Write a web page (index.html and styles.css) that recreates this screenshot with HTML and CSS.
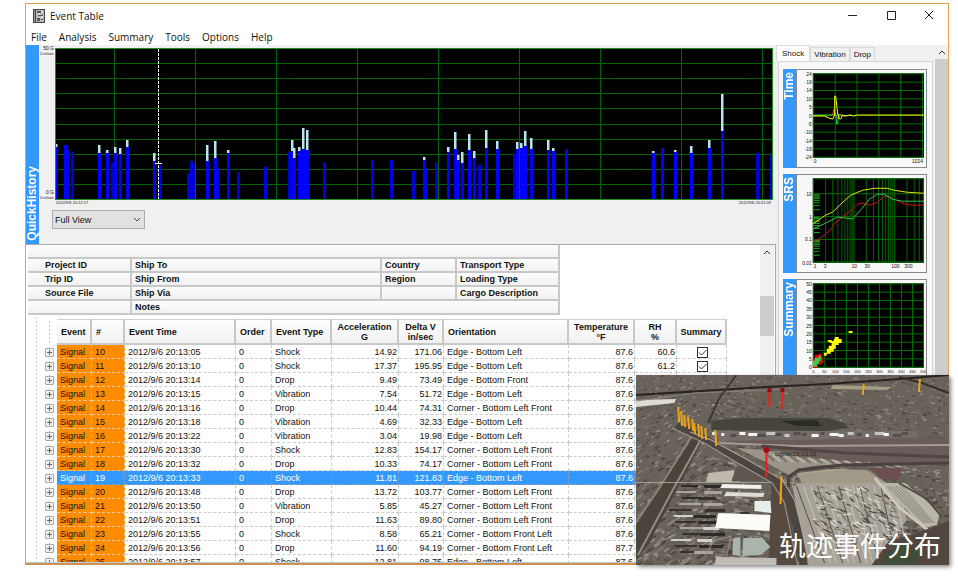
FILE: index.html
```
<!DOCTYPE html>
<html lang="en">
	<head>
		<meta charset="utf-8">
		<title>Event Table</title>
		<link rel="stylesheet" href="styles.css">
	</head>
	<body>
		<div class="window">
			<div class="titlebar">
				<svg class="appicon" viewBox="0 0 12 14">
					<rect x="0" y="0" width="12" height="14" fill="#444"/>
					<rect x="3" y="1" width="8" height="12" fill="#bbb"/>
					<rect x="1" y="1" width="1" height="12" fill="#999"/>
					<path d="M4 2h4v2H4zM5 6h5v1H5zM4 9h3v3H4zM8 10h2v1H8z" fill="#555"/>
					<path d="M8 3h2M5 5h2M8 8h2" stroke="#fff"/>
				</svg>
				<span class="title">Event Table</span>
				<button class="winbtn" aria-label="Minimize"><svg viewBox="0 0 10 10"><path d="M0 5.5h9"/></svg></button>
				<button class="winbtn" aria-label="Maximize"><svg viewBox="0 0 10 10"><path d="M1.5 1.500h8v8h-8z"/></svg></button>
				<button class="winbtn" aria-label="Close"><svg viewBox="0 0 10 10"><path d="M1 1l8 8M9 1l-8 8"/></svg></button>
			</div>
			<div class="menubar">
				<button>File</button>
				<button>Analysis</button>
				<button>Summary</button>
				<button>Tools</button>
				<button>Options</button>
				<button>Help</button>
			</div>
			<div class="main">
				<div class="left">
					<div class="history">
						<div class="strip strip-bottom"><span>QuickHistory</span></div>
						<div class="historyBody">
							<svg id="history" class="historyChart" viewBox="39 45 737 160" preserveAspectRatio="none"></svg>
							<select class="view" aria-label="View">
								<option>Full View</option>
							</select>
						</div>
					</div>
					<div class="events">
						<div class="sheet">
							<table class="info">
								<colgroup><col class="i1"><col class="i2"><col class="i3"><col class="i4"></colgroup>
								<tr><th colspan="4"></th></tr>
								<tr><th>Project ID</th><th>Ship To</th><th>Country</th><th>Transport Type</th></tr>
								<tr><th>Trip ID</th><th>Ship From</th><th>Region</th><th>Loading Type</th></tr>
								<tr><th>Source File</th><th>Ship Via</th><th></th><th>Cargo Description</th></tr>
								<tr><th></th><th colspan="3">Notes</th></tr>
							</table>
							<div class="tree">
								<table class="data">
									<colgroup>
										<col class="c0"><col class="c1"><col class="c2"><col class="c3"><col class="c4"><col class="c5">
										<col class="c6"><col class="c7"><col class="c8"><col class="c9"><col class="c10"><col class="c11">
									</colgroup>
									<thead>
										<tr>
											<td class="node"></td>
											<th>Event</th><th>#</th><th>Event Time</th><th>Order</th><th>Event Type</th>
											<th class="mid">Acceleration<br>G</th><th class="mid">Delta V<br>in/sec</th><th>Orientation</th>
											<th class="mid">Temperature<br>°F</th><th class="mid">RH<br>%</th><th class="mid">Summary</th>
										</tr>
									</thead>
									<tbody id="rows"></tbody>
								</table>
							</div>
						</div>
						<div class="scroll">
							<button aria-label="Scroll up"><svg viewBox="0 0 8 6"><path d="M1 5l3-3 3 3"/></svg></button>
							<div class="thumb"></div>
						</div>
					</div>
				</div>
				<div class="right">
					<div class="panel">
						<div class="tabs">
							<button class="on">Shock</button><button>Vibration</button><button>Drop</button>
						</div>
						<div class="page">
							<div class="group">
								<div class="strip"><span>Time</span></div>
								<svg id="time" viewBox="0 0 132 99"></svg>
							</div>
							<div class="group">
								<div class="strip"><span>SRS</span></div>
								<svg id="srs" viewBox="0 0 132 99"></svg>
							</div>
							<div class="group">
								<div class="strip"><span>Summary</span></div>
								<svg id="summary" viewBox="0 0 132 99"></svg>
							</div>
						</div>
					</div>
					<div class="scroll wide">
						<button aria-label="Scroll up"><svg viewBox="0 0 8 6"><path d="M1 5l3-3 3 3"/></svg></button>
						<div class="thumb"></div>
					</div>
				</div>
			</div>
		</div>
		<div class="map">
			<svg id="map" viewBox="0 0 312 190" preserveAspectRatio="none"></svg>
			<span class="caption">轨迹事件分布</span>
		</div>

		<script src="script.js"></script>
	</body>
</html>
```
FILE: styles.css
```
*{box-sizing: border-box;}
body{
	margin: 0;
	padding: 3px 9px 12px 25px;
	height: 100vh;
	display: flex;
	background: #ffffff;
	font-family: "Liberation Sans", Arial, sans-serif;
	font-size: 9px;
	color: #111111;
	position: relative;
	overflow: hidden;
}
button{
	border: 0;
	padding: 0;
	background: none;
	font: inherit;
	color: inherit;
}
.window{
	flex: 1;
	min-width: 0;
	display: flex;
	flex-direction: column;
	border: 1px solid #e9a24a;
	border-bottom: 2px solid #d09050;
	background: #ffffff;
}
.titlebar{
	display: flex;
	align-items: center;
	height: 24px;
	padding-left: 7px;
	font: 10px "Open Sans", "Noto Sans", sans-serif;
}
.appicon{width: 12px;height: 14px;}
.title{flex: 1;padding-left: 5px;}
.winbtn{width: 38px;height: 24px;}
.winbtn svg{width: 10px;height: 10px;fill: none;stroke: #222222;stroke-width: 1;}
.menubar{
	display: flex;
	align-items: center;
	gap: 12px;
	height: 17px;
	padding-left: 5px;
	font: 10px "Open Sans", "Noto Sans", sans-serif;
}
.main{flex: 1;min-height: 0;display: flex;}
.left{flex: 1;min-width: 0;display: flex;flex-direction: column;}
.history{display: flex;height: 199px;background: #f0f0f0;}
.historyBody{flex: 1;min-width: 0;display: flex;flex-direction: column;align-items: flex-start;}
.historyChart{display: block;width: 100%;height: 160px;}
.strip{
	width: 13px;
	background: #3399ff;
	color: #ffffff;
	display: flex;
	justify-content: center;
	align-items: flex-start;
	padding: 3px 0;
	font: bold 12px/13px "Liberation Sans", Arial, sans-serif;
}
.strip-bottom{align-items: flex-end;}
.strip span{writing-mode: vertical-rl;transform: rotate(180deg);}
.view{
	appearance: none;
	width: 93px;
	height: 19px;
	margin: 5px 0 0 13px;
	padding: 0 2px;
	border: 1px solid #adadad;
	border-radius: 0;
	font: 9px "Liberation Sans", Arial, sans-serif;
	color: #111111;
	background: #e1e1e1 url("data:image/svg+xml,%3Csvg xmlns='http://www.w3.org/2000/svg' width='8' height='6'%3E%3Cpath d='M1 1l3 3 3-3' fill='none' stroke='%23444'/%3E%3C/svg%3E") no-repeat right 3px center;
}
.events{
	flex: 1;
	min-height: 0;
	display: flex;
	border-top: 1px solid #a8a8b0;
	border-right: 1px solid #a8a8b0;
	border-bottom: 1px solid #b8cce0;
}
.sheet{flex: 1;min-width: 0;padding-left: 2px;overflow: hidden;}
table{border-collapse: separate;border-spacing: 0;table-layout: fixed;}
th{
	text-align: left;
	background: linear-gradient(#fdfdfd, #f1f1f1);
	border-right: 2px solid #c8c8c8;
	border-bottom: 2px solid #c8c8c8;
	overflow: hidden;
	white-space: nowrap;
}
.info{width: 532px;}
.info th{height: 14px;padding: 1px 3px 0;line-height: 11px;}
.info th:first-child{padding-left: 17px;}
.i1{width: 104px;}
.i2{width: 250px;}
.i3{width: 75px;}
.i4{width: 103px;}
.tree{
	padding-top: 4px;
	background: linear-gradient(#ffffff 50%, #c8c8c8 50%) 8px 0 / 1px 4px repeat-y;
}
.data{width: 699px;}
.c0{width: 29px;}
.c1{width: 35px;}
.c2{width: 33px;}
.c3{width: 111px;}
.c4{width: 36px;}
.c5{width: 60px;}
.c6{width: 67px;}
.c7{width: 45px;}
.c8{width: 125px;}
.c9{width: 66px;}
.c10{width: 42px;}
.c11{width: 50px;}
.data th{height: 26px;padding: 0 4px;line-height: 10px;border-top: 1px solid #d0d0d0;}
.data .mid{text-align: center;padding: 0 2px;}
.data td{
	height: 14px;
	padding: 1px 1px 0 3px;
	line-height: 12px;
	white-space: nowrap;
	border-right: 1px dashed #cccccc;
	border-bottom: 1px dashed #cccccc;
}
.data .node{
	border: 0;
	padding: 0 3px 0 0;
	text-align: right;
	line-height: 0;
	background: linear-gradient(#ffffff 50%, #c8c8c8 50%) 21px 0 / 1px 4px repeat-y;
}
.node button{
	width: 9px;
	height: 9px;
	border: 1px solid #a8a8a8;
	border-radius: 1px;
	background:
		linear-gradient(#666666, #666666) center / 5px 1px no-repeat,
		linear-gradient(#666666, #666666) center / 1px 5px no-repeat,
		#f0f0f0;
}
.data .mark{background: #ff8c00;border-color: #e6c9a0;}
.data .num{text-align: right;}
.data .box{text-align: center;line-height: 0;}
.box input{
	appearance: none;
	display: block;
	width: 11px;
	height: 11px;
	margin: 0 auto;
	border: 1px solid #333333;
	background: #ffffff url("data:image/svg+xml,%3Csvg xmlns='http://www.w3.org/2000/svg' width='9' height='9'%3E%3Cpath d='M1 4.5l2.500 2.500 5-5' fill='none' stroke='%23333'/%3E%3C/svg%3E") no-repeat center;
}
.data .sel td:not(.node){
	background: #3399ff;
	color: #ffffff;
	border-color: #8a9cb0;
}
.scroll{width: 14px;margin-right: 1px;background: #f0f0f0;display: flex;flex-direction: column;}
.scroll button{height: 14px;}
.scroll svg{width: 8px;height: 6px;fill: none;stroke: #333333;stroke-width: 1;}
.scroll .thumb{height: 40px;margin-top: 37px;background: #cdcdcd;}
.right{width: 172px;display: flex;background: #f0f0f0;}
.panel{flex: 1;min-width: 0;overflow: hidden;}
.tabs{display: flex;align-items: flex-end;height: 16px;font-size: 8px;}
.tabs button{
	height: 14px;
	padding: 0 3px;
	border: 1px solid #d9d9d9;
	border-bottom: 0;
	background: #f0f0f0;
}
.tabs .on{height: 16px;padding: 0 5px;background: #ffffff;}
.page{
	margin: 0 2px;
	padding: 7px 5px 0 4px;
	height: 100%;
	border: 1px solid #d5d5d5;
	background: #f7f7f7;
	display: flex;
	flex-direction: column;
	gap: 6px;
}
.group{display: flex;height: 99px;}
.group .strip{flex: none;}
.group svg{flex: 1;min-width: 0;height: 99px;background: #f8f8f8;outline: 1px solid #888888;outline-offset: -1px;}
.scroll.wide{width: 13px;margin: 0;}
.wide .thumb{flex: 1;height: auto;margin: 0;}
.map{
	position: absolute;
	right: 9px;
	bottom: 12px;
	width: 313px;
	height: 190px;
	box-shadow: 2px 2px 4px #888888;
	background: #6e675f;
	overflow: hidden;
}
.map svg{display: block;width: 100%;height: 100%;}
.caption{
	position: absolute;
	right: 8px;
	bottom: 2px;
	color: #ffffff;
	font: 27px/36px KaiTi, "AR PL UKai CN", "Noto Sans CJK SC", sans-serif;
}
```
FILE: script.js
```
// event rows: number, time, type, acceleration, delta V, orientation, temperature, RH
var rows=[
	[10,"05","Shock","14.92","171.06","Edge - Bottom Left","87.6","60.6"],
	[11,"10","Shock","17.37","195.95","Edge - Bottom Left","87.6","61.2"],
	[12,"14","Drop","9.49","73.49","Edge - Bottom Front","87.6",""],
	[13,"15","Vibration","7.54","51.72","Edge - Bottom Left","87.6",""],
	[14,"16","Drop","10.44","74.31","Corner - Bottom Left Front","87.6",""],
	[15,"18","Vibration","4.69","32.33","Edge - Bottom Left","87.6",""],
	[16,"22","Vibration","3.04","19.98","Edge - Bottom Left","87.6",""],
	[17,"30","Shock","12.83","154.17","Corner - Bottom Left Front","87.6",""],
	[18,"32","Drop","10.33","74.17","Corner - Bottom Left Front","87.6",""],
	[19,"33","Shock","11.81","121.83","Edge - Bottom Left","87.6",""],
	[20,"48","Drop","13.72","103.77","Corner - Bottom Left Front","87.6",""],
	[21,"50","Vibration","5.85","45.27","Corner - Bottom Left Front","87.6",""],
	[22,"51","Drop","11.63","89.80","Corner - Bottom Left Front","87.6",""],
	[23,"55","Shock","8.58","65.21","Corner - Bottom Front Left","87.6",""],
	[24,"56","Drop","11.60","94.19","Corner - Bottom Front Left","87.7",""],
	[25,"57","Shock","12.81","98.75","Edge - Bottom Left","87.6",""]
]
var html=""
for(var i=0;i<rows.length;i++){
	var r=rows[i]
	html+=`<tr class="${r[0]==19?"sel":""}">
		<td class="node"><button aria-label="Expand ${r[0]}"></button></td>
		<td class="mark">Signal</td><td class="mark">${r[0]}</td>
		<td>2012/9/6 20:13:${r[1]}</td><td>0</td><td>${r[2]}</td>
		<td class="num">${r[3]}</td><td class="num">${r[4]}</td><td>${r[5]}</td>
		<td class="num">${r[6]}</td><td class="num">${r[7]}</td>
		<td class="box"><input type="checkbox" checked aria-label="Summary ${r[0]}"></td>
	</tr>`
}
document.getElementById("rows").innerHTML=html

function line(x1,y1,x2,y2,c,w){
	return `<path d="M${x1} ${y1}L${x2} ${y2}" stroke="${c}" stroke-width="${w||1}" fill="none"/>`
}
function rect(x,y,w,h,c){
	return `<rect x="${x}" y="${y}" width="${w}" height="${h}" fill="${c}"/>`
}
function curve(points,c,w){
	return `<polyline points="${points}" stroke="${c}" stroke-width="${w||1}" fill="none"/>`
}
function label(x,y,t,anchor,size){
	return `<text x="${x}" y="${y}" font-size="${size||5}" text-anchor="${anchor||"start"}" fill="#111">${t}</text>`
}

// quick history: x, top of the light part (0 = none), top of the blue part
var bars=[
	[55,144,147],[64,0,145],[67,0,150],[71,0,152],[98,145,153],[106,150,153],[111,0,162],[114,147,153],
	[119,148,154],[126,140,147],[153,153,161],[158,0,165],[187,0,173],[190,0,161],[192,0,164],[206,145,161],
	[214,141,158],[217,0,168],[227,150,153],[237,0,172],[264,0,167],[288,0,152],[291,140,151],[293,148,158],
	[298,147,151],[302,128,149],[306,130,150],[323,0,162],[371,0,160],[390,0,160],[412,0,171],[423,157,160],
	[425,0,168],[435,0,163],[447,147,152],[454,132,149],[457,155,160],[461,152,163],[468,134,150],[473,151,158],
	[478,0,165],[485,130,148],[496,141,149],[513,0,154],[516,142,149],[520,143,148],[524,131,146],[530,138,149],
	[547,140,150],[552,148,151],[565,0,149],[652,151,153],[661,0,148],[674,150,152],[690,146,153],[708,140,148],
	[721,94,131],[756,0,153],[770,0,155]
]
var s=rect(55,48,718,152,"#000")
for(var x=114;x<772;x+=81) s+=line(x+.5,48,x+.5,199,"#006400")
for(var n=0;n<10;n++){
	var y=48+Math.round(n*15.1)
	s+=line(55,y+.5,773,y+.5,"#006400")
}
for(var b of bars){
	s+=rect(b[0],b[2],3,199-b[2],b[1]||b[2]<150?"#0000ff":"#0000d8")
	if(b[1]) s+=rect(b[0],b[1],2.5,b[2]-b[1],"#b8e4f4")
}
s+=`<rect x="55.5" y="48.5" width="717" height="151" fill="none" stroke="#1c8a1c"/>`
s+=`<path d="M158.5 49V199" stroke="#fff" stroke-dasharray="3 1"/><path d="M155 163.5h7" stroke="#fff"/>`
s+=label(54,50,"50 G","end")+label(54,55,"0 in/sec","end",4)
s+=label(54,194,"0 G","end")+label(54,199,"0 in/sec","end",4)
s+=label(56,204,"2012/9/6 20:12:17","start",4)+label(771,204,"2012/9/6 20:21:09","end",4)
document.getElementById("history").innerHTML=s

// time plot
s=rect(17,4,112,85,"#000")
for(var n=0;n<=5;n++) s+=line(17.5+n*22,4,17.5+n*22,89,"#007000")
var marks=["24","19","14","10","5","0","-5","-10","-14","-19","-24"]
for(var n=0;n<=10;n++){
	y=4.5+n*8.4
	s+=line(17,y,129,y,"#007000")+label(16,y+2,marks[n],"end")
}
s+=label(18,94,"0")+label(128,94,"1024","end")
s+=curve("34,46 37,46 38,40 40,47 43,50 45,45 48,47","#ff2020")
s+=curve("17,46 36,46 40,44 41,55 42,55 43,45 48,47 56,46","#30d050")
s+=curve("17,47 29,47 33,49 37,50 39,46 39,27 40,27 42,45 43,49 45,50 47,46 50,47 54,46 58,47 61,46 129,46","#ffff00")
document.getElementById("time").innerHTML=s

// shock response spectrum, log-log
s=rect(17,4,112,85,"#000")
for(var d=0;d<3;d++){
	for(var n=1;n<10;n++){
		x=17.5+41*(d+Math.log10(n))
		if(x<129) s+=line(x,4,x,89,"#006800")
		y=88.5-23*(d+Math.log10(n))
		s+=line(17,y,n==1?129:24,y,n==1?"#007000":"#20a020")
	}
}
s+=line(17,19.5,129,19.5,"#007000")
s+=`<rect x="17.5" y="4.5" width="111" height="84" fill="none" stroke="#006800"/>`
s+=label(16,22,"10","end")+label(16,45,"1","end")+label(16,67,"0.1","end")+label(16,91,"0.01","end")
s+=label(18,94,"1")+label(28,94,"3")+label(56,94,"10")+label(69,94,"30")+label(96,94,"100")+label(109,94,"300")
s+=`<g transform="translate(17 4)">`
s+=curve("0,64 8,60 14,55 17,53 23,44 35,35 45,26 50,25 58,27 65,24 72,18 80,20 90,25 98,27 112,27","#d01010")
s+=curve("0,51 13,45 25,39 33,40 40,41 48,32 57,21 65,16 72,16 80,21 90,23 112,23","#30c050")
s+=curve("0,46 13,37 20,34 27,27 38,17 50,12 62,10 75,10 82,12 95,14 112,15","#e0e000")
s+=`</g>`
document.getElementById("srs").innerHTML=s

// summary scatter
s=rect(17,4,112,85,"#000")
for(var n=0;n<=10;n++){
	x=17.5+n*11.1
	y=4.5+n*8.4
	s+=line(x,4,x,89,"#007000")+line(17,y,129,y,"#007000")
	s+=label(16,y+2,50-n*5,"end")+label(x,94,n*50,"middle",4)
}
s+=`<g transform="translate(17 4)"><path d="M0 76h2v-4h4v-1h3v3h1v6H8v2H5v3H0z" fill="#f00"/>
	<path d="M0 84v-6h2v-3h4v-2h2v5H6v3H4v3z" fill="#30d050"/>
	<path d="M11 73v-3h3v-4h2v-3h3v-2h4v5h-2v3h-3v2h-4v2z" fill="#ff0"/>
	<path d="M15 57h4v1h2v-2h1v-2h4v2h3v4h-3v2h-7v-2h-2v-1h-2zM36 48h4v2h-4z" fill="#ff0"/></g>`
document.getElementById("summary").innerHTML=s

// aerial view: blocks of houses first, then roads, yards and markers
var seed=7
function rnd(){
	seed=(seed*16807)%2147483647
	return seed/2147483647
}
function pick(a){return a[Math.floor(rnd()*a.length)]}
function poly(p,c){return `<polygon points="${p}" fill="${c}"/>`}
var tones=["#867f77","#59524b","#736b62","#4c4741","#979188","#665e56","#5f6157"]
s=`<defs><filter id="soft"><feGaussianBlur stdDeviation=".4"/></filter></defs><g filter="url(#soft)">`
s+=rect(0,0,312,190,"#69635b")
for(var i=0;i<4200;i++){
	x=rnd()*312
	y=rnd()*190
	var k=1+y/120
	s+=`<rect x="${x.toFixed(1)}" y="${y.toFixed(1)}" width="${((1+rnd()*2.5)*k).toFixed(1)}" height="${((.5+rnd()*.8)*k).toFixed(1)}" fill="${pick(tones)}" transform="rotate(${x<75?-30:8} ${x.toFixed(0)} ${y.toFixed(0)})"/>`
}
// dark field, warehouses along the line
s+=poly("75,46 100,43 190,43 208,48 212,53 190,56 75,55","#45453a")
s+=poly("145,46 180,45 185,51 160,51","#292c27")
s+=rect(75,56,205,12,"#746d68")
for(var i=0;i<22;i++) s+=rect((76+i*9).toFixed(0),57+(i%3),3+Math.round(rnd()*7),3,pick(["#f4f4f0","#c8c6c0","#55504c","#f4f4f0"]))
s+=poly("0,25 40,24 38,28 0,32","#dedbd6")
s+=poly("196,10 255,12 250,15 194,14","#a49c86")
// rail line at the top
s+=curve("0,20 130,12 190,9 250,5 312,0","#262321",2)
s+=curve("262,2 285,8 312,18","#332e2b",2)
s+=curve("0,26 60,18 150,14","#8b847d",1)
s+=curve("100,0 82,25 72,48","#3d3935",2)
// diagonal road on the left
s+=poly("57,62 67,64 12,170 0,185 0,150","#4a443d")
s+=curve("66,62 35,118 2,180","#958c80",2)
s+=curve("56,60 22,115 0,147","#8b8275",2)
// main roads
s+=poly("90,66 312,62 312,90 200,86 130,74","#6a5b58")
s+=curve("80,68 160,71 312,70","#a69c92",2)
s+=curve("125,71 210,78 312,82","#4f4543",3)
s+=poly("100,73 130,75 160,82 235,88 175,91 152,100 125,85","#9b9489")
for(var i=0;i<22;i++) s+=line(130+i*6,79+i*.5,138+i*6,86+i*.3,i%2?"#c9c4bb":"#625b55")
s+=poly("160,98 195,94 230,95 250,108 165,108","#a09988")
s+=poly("232,93 265,93 262,105 245,104","#6d5050")
// lots and yards
s+=poly("72,98 98,95 97,108 70,107","#c0b9ae")
s+=poly("100,93 112,88 135,105 95,106","#5c5750")
s+=poly("162,108 262,108 270,145 235,190 172,190 156,112","#a7a297")
for(var i=0;i<15;i++) s+=line(160+i*7,111,188+i*6,188,i%3?"#c6c2b7":"#5a554b",1)
for(var i=0;i<220;i++){
	x=176+rnd()*82
	y=111+rnd()*58
	s+=line(x.toFixed(0),y.toFixed(0),(x+2+rnd()*5).toFixed(0),(y+1+rnd()*3).toFixed(0),pick(["#48443d","#dedbd3","#777166"]))
}
s+=poly("242,108 268,108 303,137 300,150 288,153","#b9b7a9")
for(var i=0;i<6;i++) s+=line(250+i*3,111,287+i*2,148,"#8f8c7e")
s+=curve("238,103 262,132 312,172","#cfc7bb",3)
s+=curve("262,108 290,124 305,142","#504d42",2)
s+=poly("280,158 312,146 312,190 235,190 252,166","#514640")
s+=poly("247,178 265,170 290,177 275,190 245,190","#414b38")
s+=poly("135,108 148,112 162,190 132,190","#554940")
s+=rect(0,107,160,1,"#a39b92")
// sheds and the white warehouse
for(var i=0;i<24;i++){
	x=30+(i%2)*25+rnd()*18
	y=110+Math.floor(i/2)*6
	s+=rect(x.toFixed(0),y.toFixed(0),14+Math.round(rnd()*12),2+i%2,pick(["#2f2c29","#d2d0ca","#a9a59d","#38332e"]))
}
s+=poly("86,109 125,110 125,114 84,113","#f2f1ec")+poly("90,117 128,118 127,122 88,121","#dedcd4")
s+=poly("118,126 134,126 135,138 118,136","#e8efeb")
s+=poly("82,138 134,140 133,156 79,153","#fbfbf8")+rect(104,137,9,2,"#3a3632")
s+=poly("97,163 104,162 104,181 96,180","#a9b5aa")+poly("107,163 126,163 134,172 124,180 106,181","#a9b5aa")
s+=curve("70,180 77,166 95,161 90,182","#988f84",1)
s+=poly("80,182 140,183 140,190 78,190","#c0bbb4")
// curved motorway
s+=curve("40,51 70,65 105,86 140,106 152,122 160,150 167,190","#4d4540",8)
s+=curve("36,53 68,68 103,89 136,108 148,128 161,190","#a39a8d",1)
s+=curve("54,57 75,65 108,83 146,105 158,125 174,190","#b3aa9b",1)
s+=curve("152,112 152,102 162,95 205,90 312,88","#4b4241",3)
s+=curve("156,112 157,103 168,98 210,94","#b0a697",1)
s+=`</g>`
// event bars and pins
var bar=[[42,32,15],[45,36,15],[48,40,12],[52,42,12],[56,44,12],[58,48,11],[62,49,13],[65,51,13],[69,53,12],[79,55,16],[145,101,28],[227,9,11],[283,4,13]]
for(var b of bar) s+=line(b[0],b[1],b[0]-(b[0]>100?1:-1),b[1]+b[2],"#eda515",2)
s+=line(133,16,133,32,"#f02010",2)+line(146,16,145,34,"#f02010",2)+line(130,76,130,102,"#f02010",2)
s+=rect(131,13,4,4,"#8c1010")+rect(144,13,4,4,"#8c1010")
s+=`<circle cx="130" cy="75" r="3" fill="#a80c12"/>`
s+=`<text x="138" y="81" font-size="6" fill="#302c2a">Signal 20:13:33</text>`
document.getElementById("map").innerHTML=s
```
